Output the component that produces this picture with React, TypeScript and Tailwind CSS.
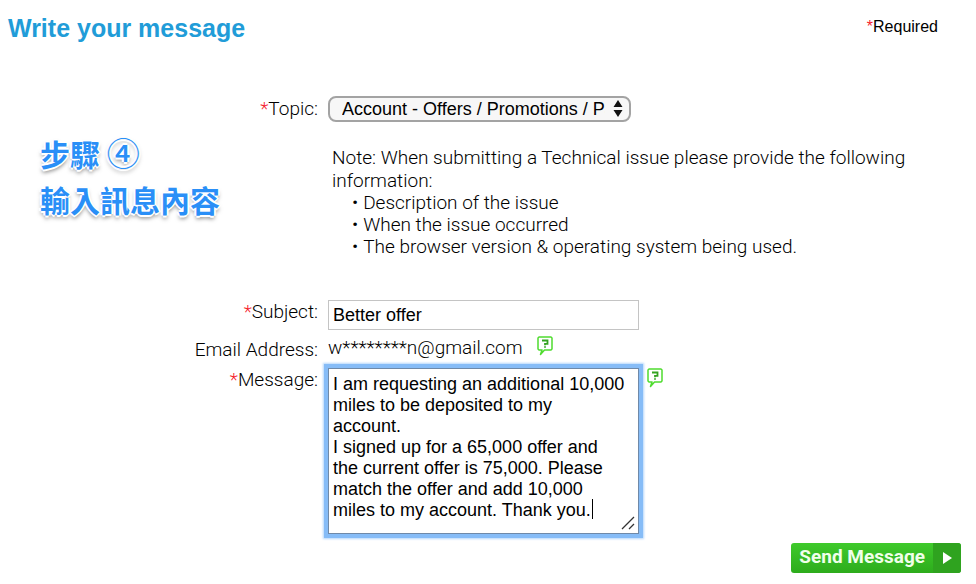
import { useState } from 'react'

const MESSAGE = `I am requesting an additional 10,000
miles to be deposited to my
account.
I signed up for a 65,000 offer and
the current offer is 75,000. Please
match the offer and add 10,000
miles to my account. Thank you.`

const issueDetails = [
  'Description of the issue',
  'When the issue occurred',
  'The browser version & operating system being used.',
]

function Required() {
  return <span className="text-[#f5222d]">*</span>
}

function HelpButton({ label }: { label: string }) {
  return (
    <button type="button" aria-label={label} className="block shrink-0">
      <svg width="16" height="20" viewBox="0 0 16 20" fill="none">
        <path
          d="M2 1h12l1 1v11l-1 1H7.5L3.5 18.5 5 14H2l-1-1V2z"
          stroke="#4fdc2f"
          strokeWidth="1.5"
          strokeLinejoin="round"
        />
        <path d="M5 4.5h5.5v3.3H8v1.4M8 10.2v1.6" stroke="#35a322" strokeWidth="1.8" />
      </svg>
    </button>
  )
}

export default function App() {
  const [subject, setSubject] = useState('Better offer')
  const [message, setMessage] = useState(MESSAGE)

  return (
    <form
      className="bg-white pt-3 pr-[15px] pb-3 font-[Roboto,'Liberation_Sans',sans-serif] text-[19px] font-light text-black"
      onSubmit={(e) => e.preventDefault()}
    >
      <header className="flex items-start justify-between pr-[23px] pl-2 font-['Liberation_Sans',Arial,sans-serif]">
        <h1 className="text-[25px] leading-8 font-bold text-[#219cd8]">Write your message</h1>
        <p className="text-base leading-[30px] font-normal">
          <Required />
          Required
        </p>
      </header>

      <div className="mt-[52px] grid grid-cols-[318px_minmax(0,1fr)] gap-x-[10px]">
        <label htmlFor="topic" className="text-right leading-[26px]">
          <Required />
          Topic:
        </label>
        <div className="relative w-[303px]">
          <select
            id="topic"
            className="block h-[26px] w-full appearance-none rounded-lg border-2 border-[#a3a3a3] bg-[#f7f7f7] pr-6 pl-3 font-['Liberation_Sans',Arial,sans-serif] text-lg leading-[22px] font-normal text-black"
          >
            <option>Account - Offers / Promotions / Partners</option>
          </select>
          <svg
            className="pointer-events-none absolute top-1 right-2"
            width="10"
            height="18"
            viewBox="0 0 10 18"
            fill="#111"
          >
            <path d="M5 0l4.5 7h-9zM5 17l4.5-7h-9z" />
          </svg>
        </div>

        <p className="mt-2 pl-10 font-['Noto_Sans_CJK_TC',sans-serif] text-[30px] leading-[46px] font-bold text-[#2a8ff7] [text-shadow:-2px_0_0_#fff,2px_0_0_#fff,0_-2px_0_#fff,0_2px_0_#fff,0_3px_4px_#777]">
          步驟 <span className="text-[33px] leading-none font-medium">④</span>
          <br />
          輸入訊息內容
        </p>
        <div className="mt-6 pl-1">
          <p className="max-w-[600px] leading-[23px]">
            Note: When submitting a Technical issue please provide the following information:
          </p>
          <ul className="pl-5 leading-[22px]">
            {issueDetails.map((item) => (
              <li key={item} className="flex gap-[5px]">
                <span>•</span>
                {item}
              </li>
            ))}
          </ul>
        </div>

        <label htmlFor="subject" className="mt-[42px] text-right leading-6">
          <Required />
          Subject:
        </label>
        <input
          id="subject"
          value={subject}
          onChange={(e) => setSubject(e.target.value)}
          className="mt-[42px] h-[30px] w-[311px] border border-[#c4c4c4] bg-white px-1 font-['Liberation_Sans',Arial,sans-serif] text-lg font-normal text-black outline-none"
        />

        <span className="mt-2 text-right leading-6">Email Address:</span>
        <div className="mt-1.5 flex items-start gap-[14px]">
          <span className="leading-6">w********n@gmail.com</span>
          <HelpButton label="Email address help" />
        </div>

        <label htmlFor="message" className="mt-1.5 text-right leading-6">
          <Required />
          Message:
        </label>
        <div className="mt-1.5 flex items-start gap-2">
          <div className="relative w-[311px]">
            <textarea
              id="message"
              value={message}
              onChange={(e) => setMessage(e.target.value)}
              className="block h-[166px] w-full resize-none overflow-hidden border border-[#6f89a8] bg-white px-1 py-[5px] font-['Liberation_Sans',Arial,sans-serif] text-lg leading-[21px] font-normal text-black caret-transparent shadow-[0_0_0_4px_#86bcf7,0_0_2px_5px_#b5d7fb] outline-none"
            />
            <span className="pointer-events-none absolute bottom-[15px] left-[264px] h-5 w-px bg-black" />
            <svg
              className="pointer-events-none absolute right-1 bottom-1"
              width="14"
              height="14"
              viewBox="0 0 14 14"
              stroke="#333"
              strokeWidth="1.3"
            >
              <path d="M1 13L13 1M8 13l5-5" />
            </svg>
          </div>
          <HelpButton label="Message help" />
        </div>
      </div>

      <div className="mt-[9px] flex justify-end">
        <button
          type="submit"
          className="flex h-[30px] overflow-hidden rounded-[3px] bg-linear-to-b from-[#3fca2b] to-[#2dac1c] font-[Roboto,sans-serif] text-[19px] leading-7 font-bold text-[#f0ffea]"
        >
          <span className="px-2">Send Message</span>
          <span className="flex h-full w-7 items-center justify-center bg-[#2fa31f]">
            <svg width="10" height="12" viewBox="0 0 10 12" fill="#fff">
              <path d="M1 0l9 6-9 6z" />
            </svg>
          </span>
        </button>
      </div>
    </form>
  )
}
